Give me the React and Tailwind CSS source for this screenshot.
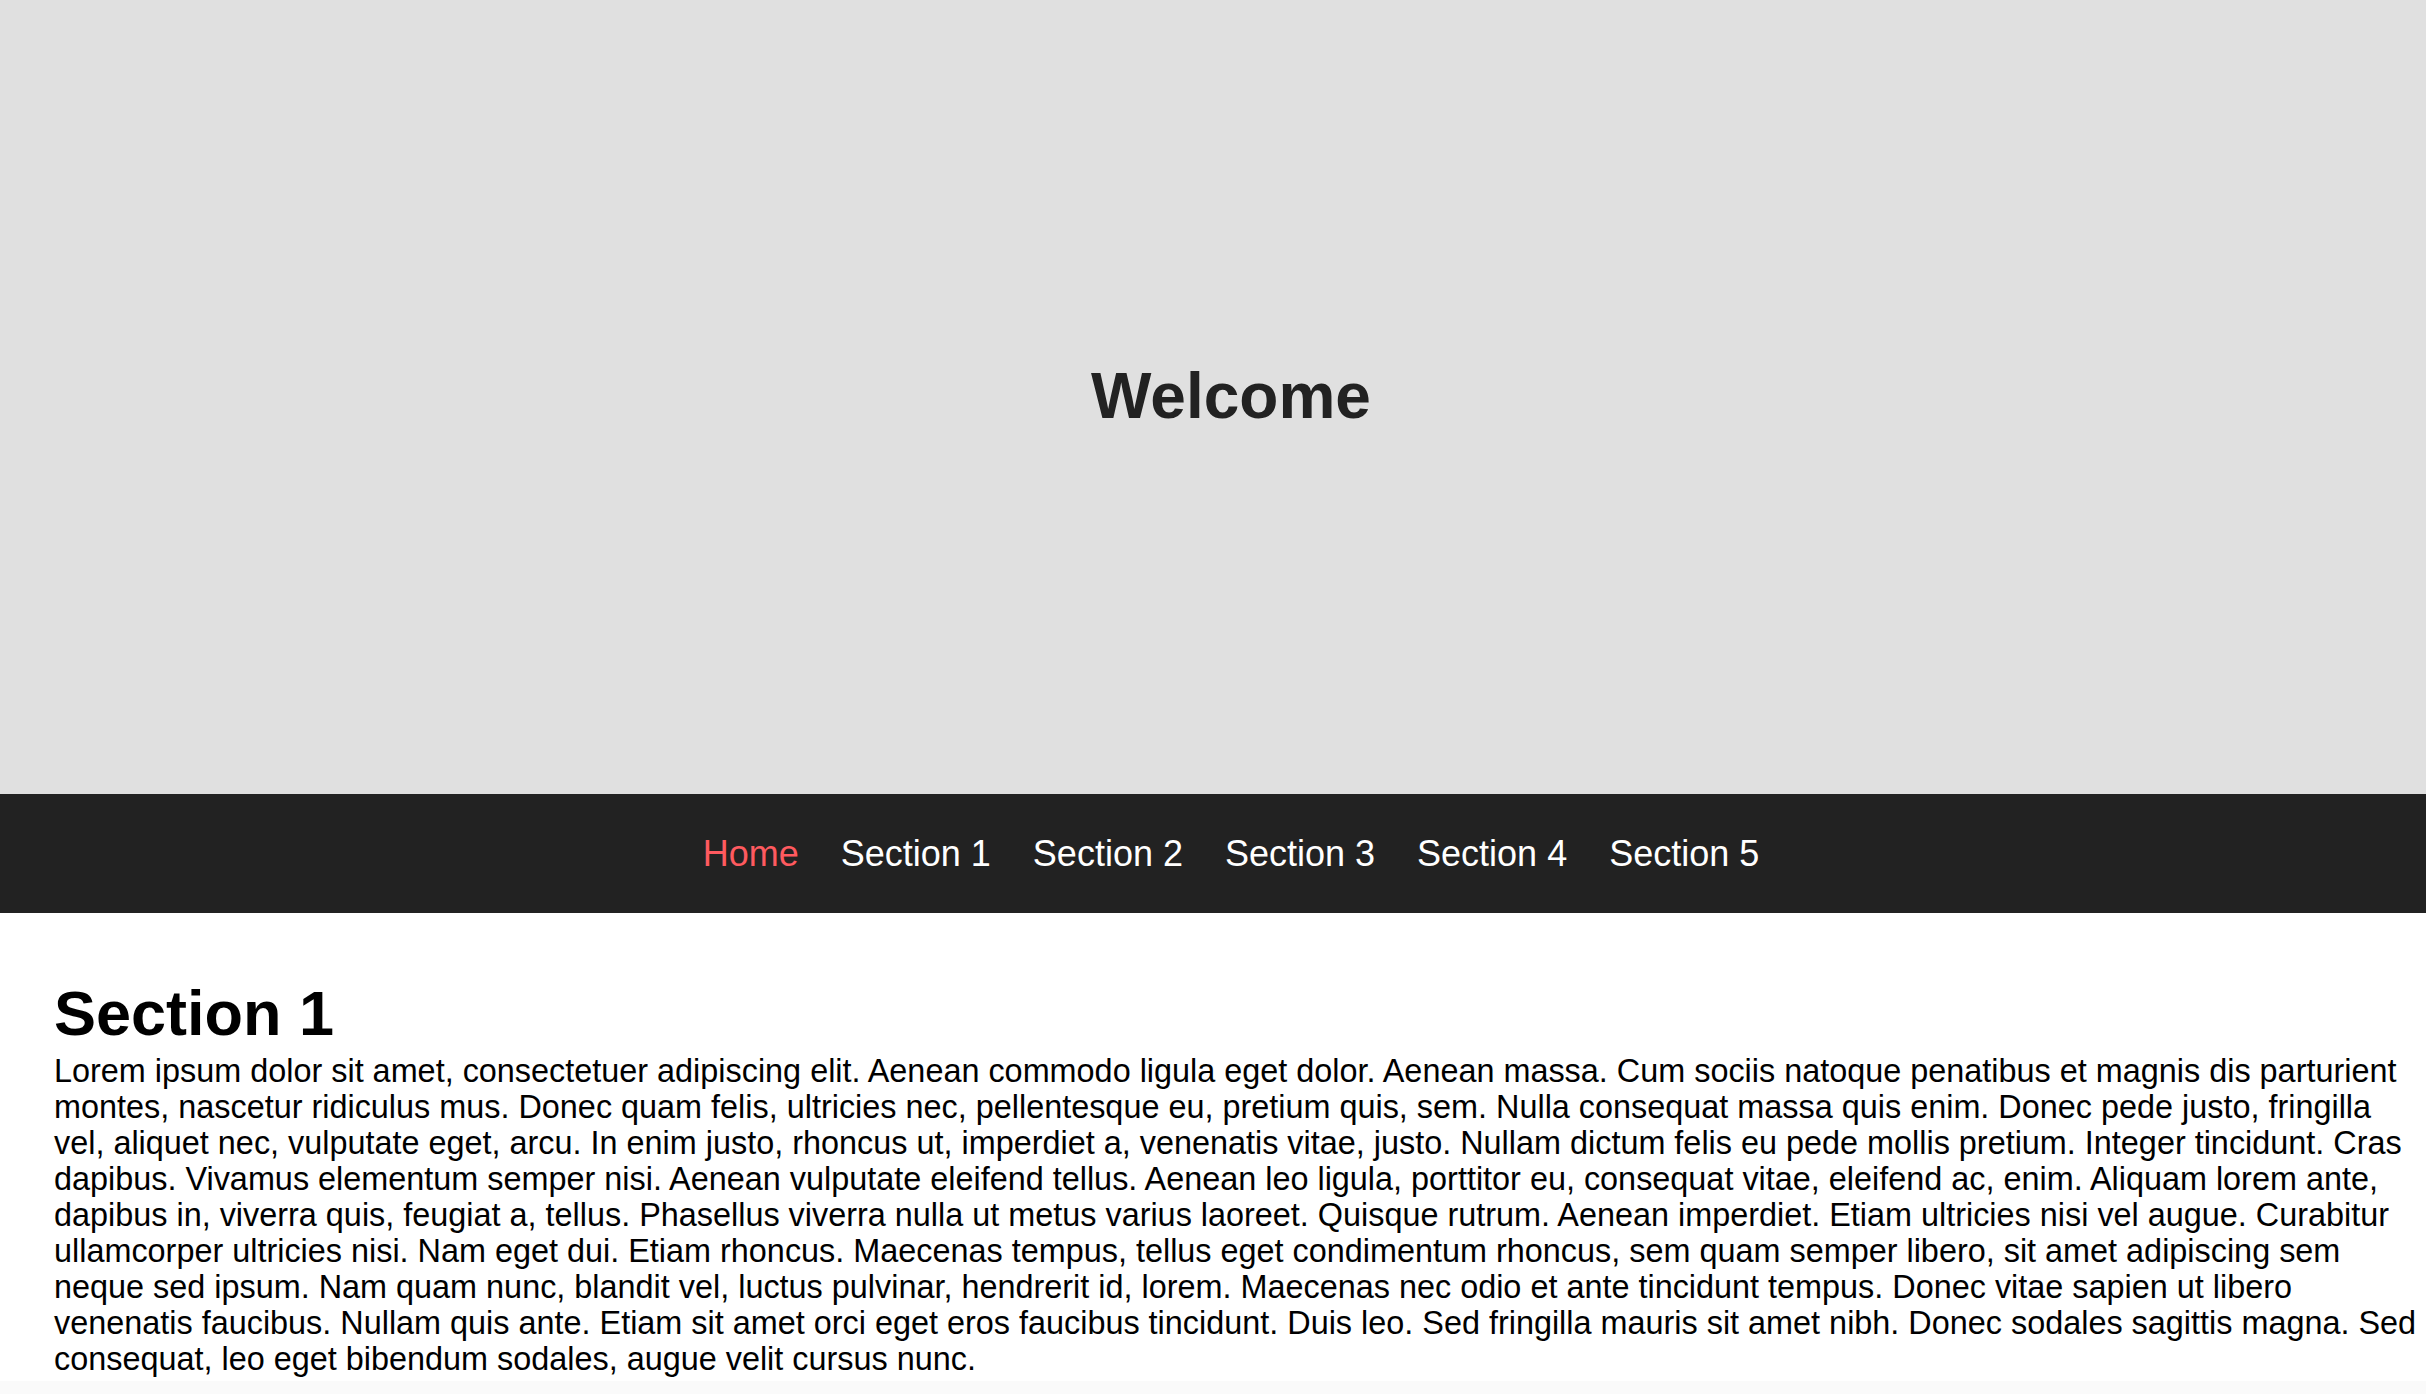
import React from "react";

const text =
  "Lorem ipsum dolor sit amet, consectetuer adipiscing elit. Aenean commodo ligula eget dolor. Aenean massa. Cum sociis natoque penatibus et magnis dis parturient montes, nascetur ridiculus mus. Donec quam felis, ultricies nec, pellentesque eu, pretium quis, sem. Nulla consequat massa quis enim. Donec pede justo, fringilla vel, aliquet nec, vulputate eget, arcu. In enim justo, rhoncus ut, imperdiet a, venenatis vitae, justo. Nullam dictum felis eu pede mollis pretium. Integer tincidunt. Cras dapibus. Vivamus elementum semper nisi. Aenean vulputate eleifend tellus. Aenean leo ligula, porttitor eu, consequat vitae, eleifend ac, enim. Aliquam lorem ante, dapibus in, viverra quis, feugiat a, tellus. Phasellus viverra nulla ut metus varius laoreet. Quisque rutrum. Aenean imperdiet. Etiam ultricies nisi vel augue. Curabitur ullamcorper ultricies nisi. Nam eget dui. Etiam rhoncus. Maecenas tempus, tellus eget condimentum rhoncus, sem quam semper libero, sit amet adipiscing sem neque sed ipsum. Nam quam nunc, blandit vel, luctus pulvinar, hendrerit id, lorem. Maecenas nec odio et ante tincidunt tempus. Donec vitae sapien ut libero venenatis faucibus. Nullam quis ante. Etiam sit amet orci eget eros faucibus tincidunt. Duis leo. Sed fringilla mauris sit amet nibh. Donec sodales sagittis magna. Sed consequat, leo eget bibendum sodales, augue velit cursus nunc.";

export default function App() {
  const items = ["Home", "Section 1", "Section 2", "Section 3", "Section 4", "Section 5"];
  return (
    <div className="w-[2426px] h-[1394px] overflow-hidden bg-white font-['Liberation_Sans',Arial,sans-serif]">
      <header className="h-[794px] bg-[#e0e0e0] flex items-center justify-center pl-[36px]">
        <h1 className="text-[64px] font-bold text-[#222222] leading-[1.15]">Welcome</h1>
      </header>
      <nav className="h-[119px] bg-[#222222] flex items-center justify-center pl-[36px]">
        <ul className="flex gap-[42px] text-[36px] leading-[1.15]">
          {items.map((it, i) => (
            <li key={it} className={i === 0 ? "text-[#ff5a5f]" : "text-white"}>
              {it}
            </li>
          ))}
        </ul>
      </nav>
      <section className="pt-[63px] pl-[54px] pr-[4px]">
        <h2 className="text-[63px] font-bold text-black leading-[74px] mb-[3px]">Section 1</h2>
        <p className="text-[32.4px] leading-[36px] text-black">{text}</p>
      </section>
      <div className="h-[40px] bg-[#fafafa] mt-[4px]" />
    </div>
  );
}
